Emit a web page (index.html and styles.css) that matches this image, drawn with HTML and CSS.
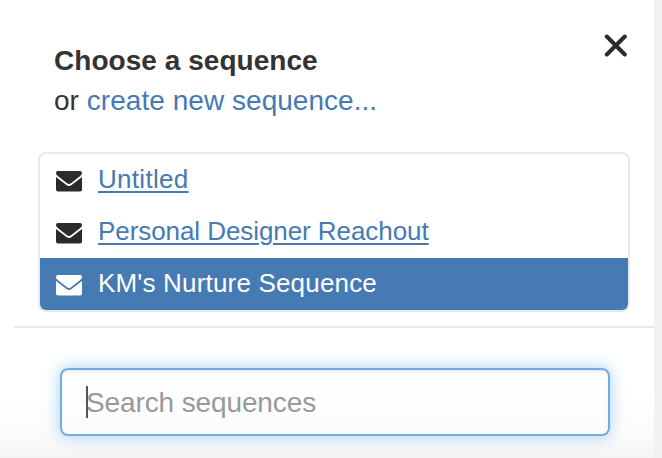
FILE: index.html
```html
<!DOCTYPE html>
<html lang="en">
<head>
  <meta charset="UTF-8" />
  <meta name="viewport" content="width=device-width, initial-scale=1.0"/>
  <title>Choose a sequence</title>
  <link rel="stylesheet" href="styles.css">
</head>
<body>
  <!-- envelope shape shared by the list items -->
  <svg class="sprite" width="0" height="0">
    <symbol id="envelope" viewBox="0 0 26 21">
      <path d="M2 0h22a2 2 0 0 1 2 2c0 1.2-.8 2.2-1.8 2.9L15 12.3c-1.4 1-2.6 1-4 0L1.8 4.9C.8 4.200 0 3.200 0 2a2 2 0 0 1 2-2z"/>
      <path d="M0 6l10.400 8.100c1.800 1.300 3.400 1.300 5.200 0L26 6v12.600a2 2 0 0 1-2 2H2a2 2 0 0 1-2-2z"/>
    </symbol>
  </svg>

  <div class="panel">
    <div class="header">
      <div class="heading">
        <h1>Choose a sequence</h1>
        <p>or <a href="#">create new sequence...</a></p>
      </div>
      <button class="close" type="button" aria-label="Close">
        <svg width="24" height="24" viewBox="0 0 24 24"><path d="M2.800 2.500l18 18M20.800 2.500l-18 18"/></svg>
      </button>
    </div>

    <ul class="sequences">
      <li>
        <svg class="icon"><use href="#envelope"/></svg>
        <a class="short" href="#">Untitled</a>
      </li>
      <li>
        <svg class="icon"><use href="#envelope"/></svg>
        <a class="long" href="#">Personal Designer Reachout</a>
      </li>
      <li class="active">
        <svg class="icon"><use href="#envelope"/></svg>
        <span>KM's Nurture Sequence</span>
      </li>
    </ul>

    <!-- Search -->
    <div class="search">
      <div class="search-box">
        <span class="caret"></span>
        <span class="placeholder">Search sequences</span>
      </div>
    </div>
  </div>
</body>
</html>
```

FILE: styles.css
```css
* {
  box-sizing: border-box;
}

body {
  margin: 0;
  height: 458px;
  overflow: hidden;
  background-color: #f2f2f2;
  font-family: "Liberation Sans", Arial, sans-serif;
  font-size: 28px;
  color: #333;
}

.sprite {
  display: block;
}

.panel {
  width: 654px;
  height: 458px;
  background: linear-gradient(#fff 390px, #fcfcfc 430px, #f5f5f5);
}

.header {
  display: flex;
  justify-content: space-between;
  height: 152px;
  padding: 41px 26px 0 54px;
}

.heading h1,
.heading p {
  margin: 0;
  font-size: 28px;
  line-height: 40px;
  letter-spacing: 0.04px;
}

a {
  color: #457ab2;
  text-decoration: none;
}

.close {
  align-self: flex-start;
  margin-top: -7px;
  padding: 0;
  border: 0;
  background: none;
}

.close svg {
  display: block;
  fill: none;
  stroke: #292b2c;
  stroke-width: 4;
  stroke-linecap: round;
}

.sequences {
  margin: 0 24px 0 38px;
  padding: 0;
  height: 160px;
  list-style: none;
  border: 2px solid #e9e9e9;
  border-radius: 8px;
  overflow: hidden;
  font-size: 26px;
}

.sequences li {
  display: flex;
  align-items: center;
  gap: 16px;
  height: 52px;
  padding: 0 0 2px 16px;
}

.sequences a {
  text-decoration: underline;
  text-decoration-thickness: 2px;
  text-underline-offset: 3px;
}

.sequences .short {
  letter-spacing: 0.3px;
}

.sequences .long {
  letter-spacing: -0.07px;
}

.icon {
  width: 26px;
  height: 21px;
  margin-top: 4px;
  fill: #292b2c;
}

.active {
  background-color: #457ab2;
  color: #fff;
  letter-spacing: 0.18px;
}

.active .icon {
  fill: #fff;
}

.search {
  margin: 14px 0 0 14px;
  padding: 40px 44px 0 46px;
  border-top: 2px solid #e9e9e9;
}

.search-box {
  display: flex;
  align-items: center;
  height: 68px;
  padding-left: 24px;
  border: 2px solid #70ace5;
  border-radius: 8px;
  background: linear-gradient(#fff, #fcfcfc);
  box-shadow: inset 0 2px 2px rgba(0,0,0,0.075), 0 0 16px rgba(102,175,233,0.6);
}

.caret {
  width: 2px;
  height: 32px;
  margin-right: -2px;
  background-color: #555;
}

.placeholder {
  padding-top: 2px;
  color: #999;
  letter-spacing: -0.12px;
}
```
